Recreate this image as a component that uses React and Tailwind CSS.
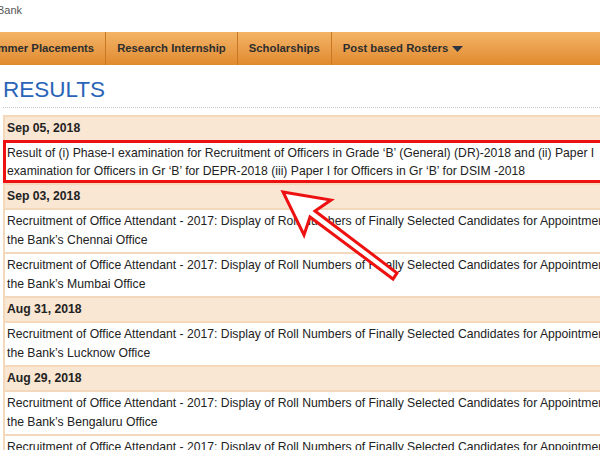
import React from "react";

const font = { fontFamily: '"Liberation Sans", Arial, sans-serif' };

const navItems = ["Summer Placements", "Research Internship", "Scholarships"];

const rows = [
  { type: "date", text: "Sep 05, 2018" },
  {
    type: "item",
    highlight: true,
    lines: [
      "Result of (i) Phase-I examination for Recruitment of Officers in Grade \u2018B\u2019 (General) (DR)-2018 and (ii) Paper I",
      "examination for Officers in Gr \u2018B\u2019 for DEPR-2018 (iii) Paper I for Officers in Gr \u2018B\u2019 for DSIM -2018",
    ],
  },
  { type: "date", text: "Sep 03, 2018" },
  {
    type: "item",
    lines: [
      "Recruitment of Office Attendant - 2017: Display of Roll Numbers of Finally Selected Candidates for Appointment as Office Attendant in",
      "the Bank\u2019s Chennai Office",
    ],
  },
  {
    type: "item",
    lines: [
      "Recruitment of Office Attendant - 2017: Display of Roll Numbers of Finally Selected Candidates for Appointment as Office Attendant in",
      "the Bank\u2019s Mumbai Office",
    ],
  },
  { type: "date", text: "Aug 31, 2018" },
  {
    type: "item",
    lines: [
      "Recruitment of Office Attendant - 2017: Display of Roll Numbers of Finally Selected Candidates for Appointment as Office Attendant in",
      "the Bank\u2019s Lucknow Office",
    ],
  },
  { type: "date", text: "Aug 29, 2018" },
  {
    type: "item",
    lines: [
      "Recruitment of Office Attendant - 2017: Display of Roll Numbers of Finally Selected Candidates for Appointment as Office Attendant in",
      "the Bank\u2019s Bengaluru Office",
    ],
  },
  {
    type: "item",
    lines: [
      "Recruitment of Office Attendant - 2017: Display of Roll Numbers of Finally Selected Candidates for Appointment as Office Attendant in",
      "the Bank\u2019s Kolkata Office",
    ],
  },
];

function Row({ row }) {
  if (row.type === "date") {
    return (
      <div className="border-t-2 border-[#f4d8bb] bg-[#f9e6d3] py-[2px] pl-[2px] text-[12.2px] font-bold leading-[19px] text-[#222]">
        {row.text}
      </div>
    );
  }
  if (row.highlight) {
    return (
      <div className="-ml-[2px] border-[3px] border-[#ee1111] bg-white pt-[1px] pl-[1px] text-[12.2px] leading-[18px] text-[#222]">
        {row.lines.map((l, i) => (
          <div key={i} className="whitespace-nowrap">{l}</div>
        ))}
      </div>
    );
  }
  return (
    <div className="border-t-2 border-[#f4d8bb] bg-white py-[2px] pl-[2px] text-[12.2px] leading-[19px] text-[#222]">
      {row.lines.map((l, i) => (
        <div key={i} className="whitespace-nowrap">{l}</div>
      ))}
    </div>
  );
}

export default function App() {
  return (
    <div className="relative h-[450px] w-[600px] overflow-hidden bg-white" style={font}>
      <div className="h-[32px] pt-[2px] text-[11px] text-[#555]">
        <span className="-ml-[3px]">Bank</span>
      </div>

      <div className="flex h-[33px] items-stretch bg-gradient-to-b from-[#f3b466] to-[#e08a2c] text-[11.3px] font-bold text-[#2e2e2e]">
        <div className="-ml-[28px] flex">
          {navItems.map((n) => (
            <div key={n} className="flex items-center border-r border-[#c97720] px-[11px] whitespace-nowrap">
              {n}
            </div>
          ))}
          <div className="flex items-center gap-[4px] px-[11px] whitespace-nowrap">
            Post based Rosters
            <svg width="11" height="6" viewBox="0 0 11 6">
              <path d="M0 0H11L5.5 6Z" fill="#2e3440" />
            </svg>
          </div>
        </div>
      </div>

      <h1 className="pl-[3px] pt-[12px] text-[22.5px] leading-[26px] text-[#2a64b8]">RESULTS</h1>
      <div className="ml-[3px] mt-[4px] border-t border-dotted border-[#c8c8c8]" />

      <div className="ml-[3px] mt-[7px] w-[700px] border-l-2 border-[#f4d8bb]">
        {rows.map((r, i) => (
          <Row key={i} row={r} />
        ))}
      </div>

      <svg className="absolute left-0 top-0" width="600" height="450" viewBox="0 0 600 450">
        <polygon
          points="283,192 331,200 315,211 397,273 393,279 310,217 304,235"
          fill="#fff"
          stroke="#ee1111"
          strokeWidth="3"
          strokeLinejoin="miter"
        />
      </svg>
    </div>
  );
}
